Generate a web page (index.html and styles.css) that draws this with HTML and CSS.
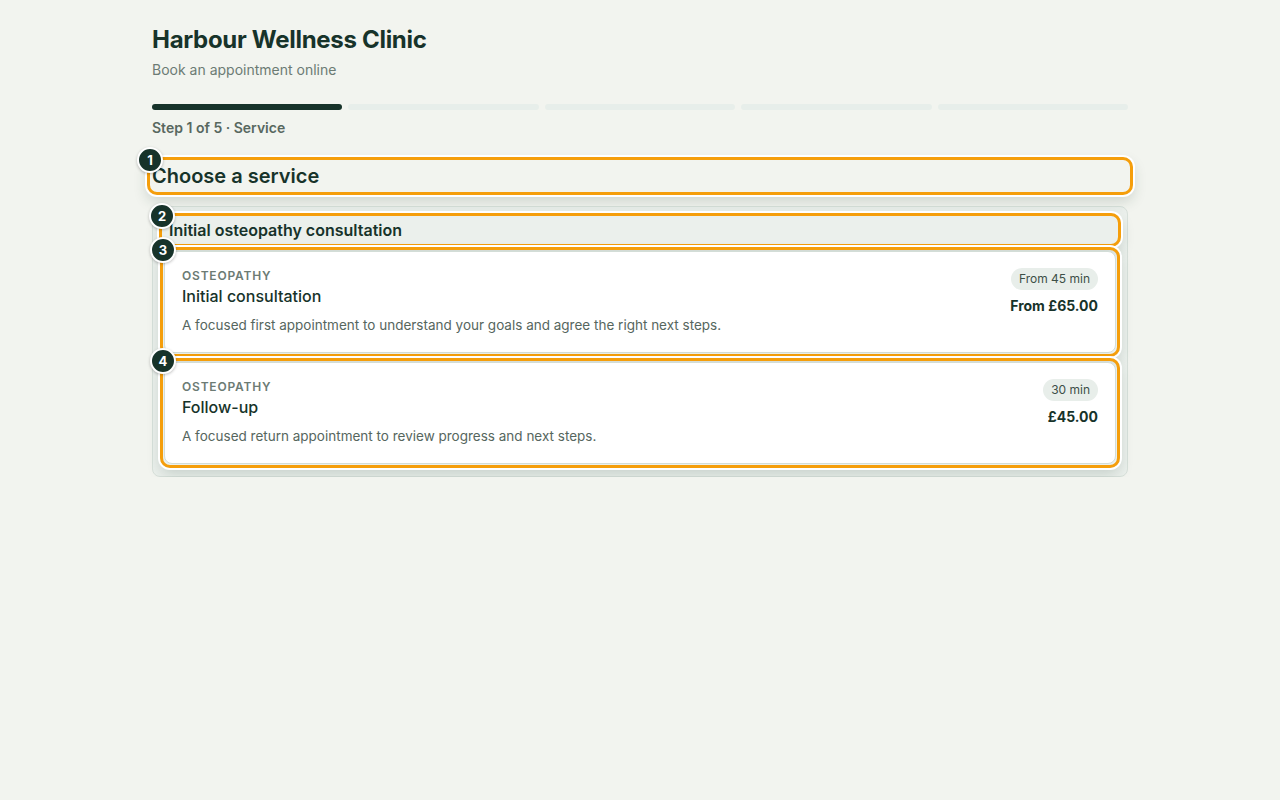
FILE: index.html
```html
<!DOCTYPE html>
<html lang="en">
<head>
<meta charset="utf-8">
<title>Harbour Wellness Clinic</title>
<link rel="stylesheet" href="styles.css">
</head>
<body>
<main class="page">
  <header class="header">
    <h1 class="title">Harbour Wellness Clinic</h1>
    <p class="subtitle">Book an appointment online</p>
  </header>
  <div class="progress">
    <span class="seg active"></span>
    <span class="seg"></span>
    <span class="seg"></span>
    <span class="seg"></span>
    <span class="seg"></span>
  </div>
  <p class="step">Step 1 of 5 · Service</p>

  <h2 class="section-title annotated"><span class="badge">1</span>Choose a service</h2>

  <div class="group">
    <h3 class="group-title annotated"><span class="badge">2</span>Initial osteopathy consultation</h3>

    <div class="card annotated"><span class="badge">3</span>
      <div class="card-main">
        <div class="eyebrow">OSTEOPATHY</div>
        <div class="card-title">Initial consultation</div>
        <p class="card-desc">A focused first appointment to understand your goals and agree the right next steps.</p>
      </div>
      <div class="card-side">
        <span class="pill">From 45 min</span>
        <span class="price">From £65.00</span>
      </div>
    </div>

    <div class="card annotated"><span class="badge">4</span>
      <div class="card-main">
        <div class="eyebrow">OSTEOPATHY</div>
        <div class="card-title">Follow-up</div>
        <p class="card-desc">A focused return appointment to review progress and next steps.</p>
      </div>
      <div class="card-side">
        <span class="pill">30 min</span>
        <span class="price">£45.00</span>
      </div>
    </div>
  </div>
</main>
</body>
</html>
```

FILE: styles.css
```css
* { box-sizing: border-box; }
html, body { margin: 0; padding: 0; }
body {
  background: #f2f4ef;
  font-family: Inter, "Liberation Sans", sans-serif;
  color: #17332a;
}
.page {
  width: 976px;
  margin: 0 auto;
  padding-top: 24px;
}
.title {
  margin: 0;
  font-size: 24px;
  line-height: 32px;
  font-weight: 700;
  letter-spacing: -0.3px;
  color: #17332a;
}
.subtitle {
  margin: 4px 0 0;
  font-size: 14px;
  line-height: 20px;
  color: #6c7b74;
}
.progress {
  display: flex;
  gap: 6px;
  margin-top: 24px;
}
.seg {
  flex: 1;
  height: 6px;
  border-radius: 3px;
  background: #e7eeea;
}
.seg.active { background: #17332a; }
.step {
  margin: 8px 0 0;
  font-size: 14px;
  line-height: 20px;
  font-weight: 600;
  color: #58685f;
}
.section-title {
  margin: 24px 0 0;
  font-size: 20px;
  line-height: 28px;
  font-weight: 600;
  color: #17332a;
}
.group {
  margin-top: 16px;
  background: #ebf0ec;
  border: 1px solid #d8e1db;
  border-radius: 8px;
  padding: 11px 11px 12px;
  display: flex;
  flex-direction: column;
  gap: 9px;
}
.group-title {
  margin: 0;
  font-size: 16px;
  line-height: 24px;
  font-weight: 600;
  padding-left: 5px;
  color: #17332a;
}
.card {
  display: flex;
  justify-content: space-between;
  align-items: flex-start;
  background: #ffffff;
  border: 1px solid #d3ddd7;
  border-radius: 8px;
  padding: 16px 17px 17px 17px;
}
.eyebrow {
  font-size: 12px;
  line-height: 16px;
  font-weight: 600;
  letter-spacing: 0.8px;
  color: #6c7b74;
}
.card-title {
  margin-top: 1px;
  font-size: 16px;
  line-height: 22px;
  font-weight: 500;
  color: #17332a;
}
.card-desc {
  margin: 8px 0 0;
  font-size: 13.5px;
  line-height: 20px;
  color: #56665e;
}
.card-side {
  display: flex;
  flex-direction: column;
  align-items: flex-end;
  gap: 6px;
}
.pill {
  display: inline-block;
  padding: 0 8px;
  height: 22px;
  line-height: 22px;
  border-radius: 11px;
  background: #e8eeea;
  font-size: 12px;
  color: #3d4f47;
}
.price {
  font-size: 14px;
  line-height: 20px;
  font-weight: 700;
  color: #17332a;
}

/* annotation overlays */
.annotated { position: relative; }
.annotated::after {
  content: "";
  position: absolute;
  inset: -5px;
  border: 3px solid #f59e0b;
  border-radius: 10px;
  box-shadow: 0 0 0 2px #ffffff, 0 6px 14px rgba(30, 60, 45, 0.18);
  pointer-events: none;
}
.badge {
  position: absolute;
  top: -15px;
  left: -15px;
  z-index: 2;
  width: 26px;
  height: 26px;
  border-radius: 50%;
  background: #17332a;
  border: 2px solid #ffffff;
  box-shadow: 0 1px 3px rgba(0,0,0,0.25);
  color: #ffffff;
  font-size: 13px;
  font-weight: 700;
  line-height: 22px;
  text-align: center;
  letter-spacing: 0;
}
```
